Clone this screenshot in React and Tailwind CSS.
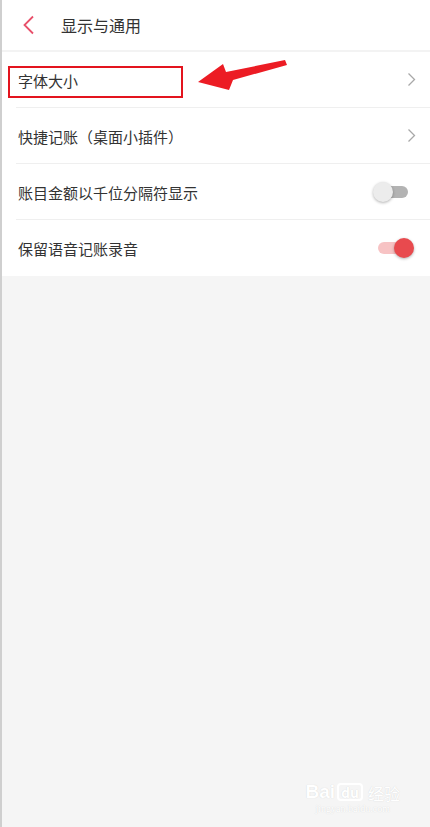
import React from 'react';

const font = { fontFamily: '"Noto Sans CJK SC", "Noto Sans", sans-serif' };

function Chevron() {
  return (
    <svg width="9" height="15" viewBox="0 0 9 15" className="shrink-0">
      <path d="M1.5 1.5 L7.5 7.5 L1.5 13.5" fill="none" stroke="#a8a8a8" strokeWidth="1.3" />
    </svg>
  );
}

function Toggle({ on }) {
  return (
    <div className="relative w-[30px] h-[12px] mr-[8px]">
      <div className={`absolute inset-0 rounded-full ${on ? 'bg-[#f7c3c4]' : 'bg-[#b3b3b3]'}`} />
      <div
        className={`absolute top-[-4px] w-[20px] h-[20px] rounded-full shadow-[0_1px_3px_rgba(0,0,0,0.3)] ${
          on ? 'left-[16px] bg-[#e84a4e]' : 'left-[-5px] bg-[#ececec]'
        }`}
      />
    </div>
  );
}

function Row({ label, right, last }) {
  return (
    <div className="pl-[14px]">
      <div className={`h-[56px] flex items-center justify-between pr-[14px] ${last ? '' : 'border-b border-[#efefef]'}`}>
        <span className="pl-[2px] pt-[3px] text-[15px] text-[#333]">{label}</span>
        {right}
      </div>
    </div>
  );
}

export default function App() {
  return (
    <div className="relative min-h-screen w-[430px] bg-[#f5f5f5] border-l-2 border-[#cfcfcf] overflow-hidden" style={font}>
      {/* Header */}
      <div className="h-[52px] bg-white flex items-center border-b-2 border-[#f3f3f3]">
        <svg width="14" height="20" viewBox="0 0 14 20" className="ml-[20px]">
          <path d="M11 1.5 L2.5 10 L11 18.5" fill="none" stroke="#e8506a" strokeWidth="1.8" />
        </svg>
        <span className="ml-[25px] text-[16px] text-[#333]">显示与通用</span>
      </div>

      {/* Settings list */}
      <div className="bg-white">
        <Row label="字体大小" right={<Chevron />} />
        <Row label="快捷记账（桌面小插件）" right={<Chevron />} />
        <Row label="账目金额以千位分隔符显示" right={<Toggle on={false} />} />
        <Row label="保留语音记账录音" right={<Toggle on />} last />
      </div>

      {/* Annotation: red box + arrow */}
      <div className="absolute left-[6px] top-[66px] w-[175px] h-[32px] border-2 border-[#e3141e]" />
      <svg className="absolute left-0 top-0" width="430" height="120" viewBox="0 0 430 120">
        <polygon
          points="196,82 221,64 224,72 283,60 285,65 231,80 227,90"
          fill="#ec1c24"
        />
      </svg>

      {/* Watermark */}
      <div className="absolute right-[30px] bottom-[13px] flex flex-col items-center text-white [text-shadow:0_0_1px_#cfcfcf]">
        <div className="flex items-end gap-[2px] leading-none">
          <span className="text-[19px] font-bold" style={{ fontFamily: 'Arial, "Liberation Sans", sans-serif' }}>Bai</span>
          <span className="text-[14px] font-bold px-[2px] rounded-[4px] border-2 border-white">du</span>
          <span className="text-[16px] ml-[3px]">经验</span>
        </div>
        <span className="text-[10px] mt-[3px] leading-none" style={{ fontFamily: '"Liberation Serif", serif' }}>jingyan.baidu.com</span>
      </div>
    </div>
  );
}
